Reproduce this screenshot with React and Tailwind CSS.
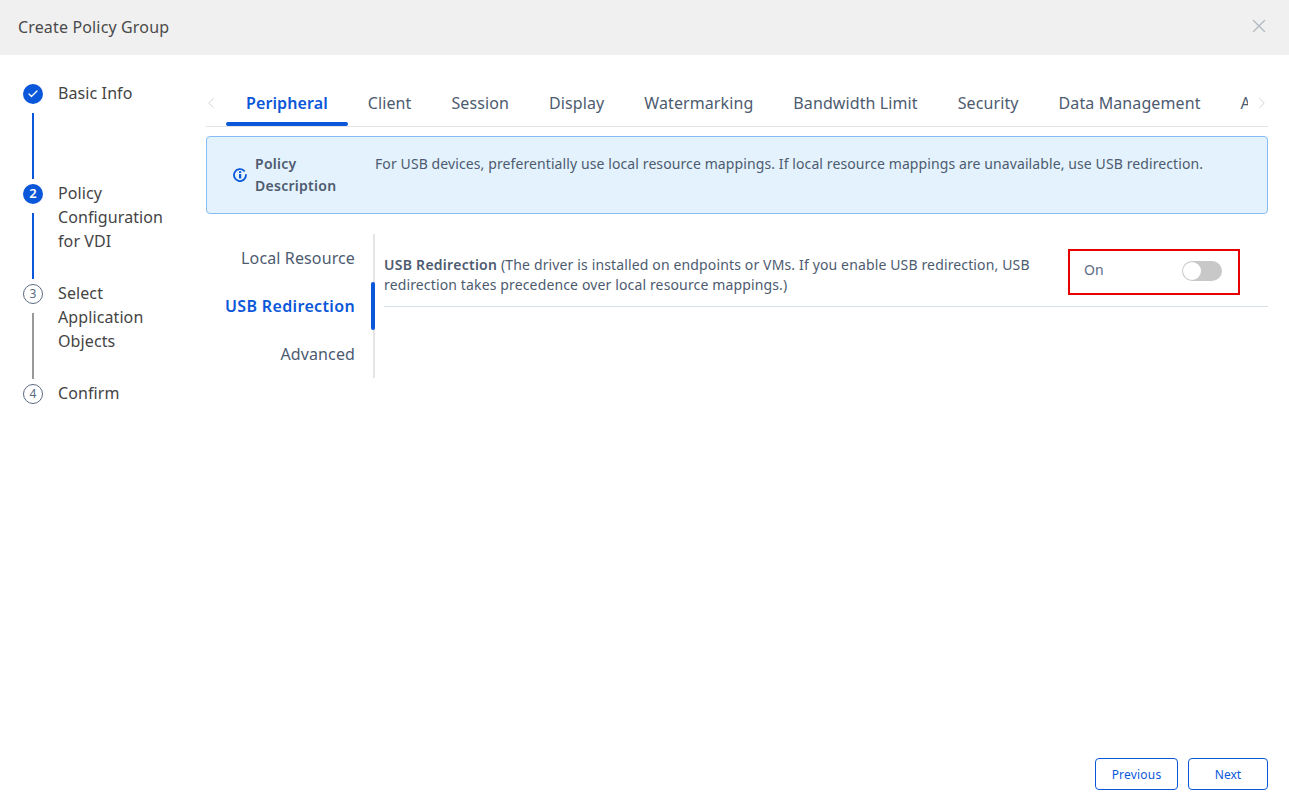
import { X, ChevronLeft, ChevronRight, Check } from "lucide-react";

const steps = [
  { label: "Basic Info", state: "done" },
  { label: "Policy Configuration for VDI", state: "active", num: 2 },
  { label: "Select Application Objects", state: "todo", num: 3 },
  { label: "Confirm", state: "todo", num: 4, last: true },
];

const tabs = [
  "Peripheral",
  "Client",
  "Session",
  "Display",
  "Watermarking",
  "Bandwidth Limit",
  "Security",
  "Data Management",
  "Advanced",
];

const Step = ({ step }) => {
  const isTodo = step.state === "todo";
  return (
    <div className={`flex ${step.last ? "" : "h-[100px]"}`}>
      <div className="w-[20px] flex flex-col items-center shrink-0">
        {isTodo ? (
          <div className="w-[20px] h-[20px] rounded-full border border-[#5b6b82] text-[#5b6b82] text-[12px] flex items-center justify-center">
            {step.num}
          </div>
        ) : (
          <div className="w-[20px] h-[20px] rounded-full bg-[#0b57d9] text-white text-[13px] font-semibold flex items-center justify-center">
            {step.state === "done" ? <Check size={12} strokeWidth={2.5} /> : step.num}
          </div>
        )}
        {!step.last && (
          <div className={`w-[2px] h-[66px] mt-[9px] ${isTodo ? "bg-[#999999]" : "bg-[#0b57d9]"}`} />
        )}
      </div>
      <div className="ml-[15px] w-[112px] text-[16px] leading-[24px] tracking-[0.1px] text-[#444] -mt-[3px]">
        {step.label}
      </div>
    </div>
  );
};

const App = () => {
  return (
    <div className="h-[805px] w-[1289px] flex flex-col bg-white overflow-hidden font-['Noto_Sans','Open_Sans',sans-serif]">
      {/* Header */}
      <div className="h-[55px] bg-[#f0f0f0] flex items-center justify-between pl-[18px] pr-[19px] shrink-0">
        <span className="text-[16px] tracking-[0.15px] text-[#4a4a4a] -mt-[2px]">Create Policy Group</span>
        <X size={22} strokeWidth={1.5} className="text-[#b4bac2] -mt-[4px]" />
      </div>

      <div className="flex flex-1 min-h-0">
        {/* Steps */}
        <div className="w-[206px] pl-[23px] pt-[29px] shrink-0">
          {steps.map((step) => (
            <Step key={step.label} step={step} />
          ))}
        </div>

        <div className="w-[1062px] flex flex-col">
          {/* Tabs */}
          <div className="mt-[24px] h-[48px] flex items-center border-b border-[#e5e5e5] relative">
            <div className="w-[20px] flex justify-start shrink-0">
              <ChevronLeft size={18} strokeWidth={1.25} className="text-[#ccd0d5] -ml-[4px] shrink-0" />
            </div>
            <div className="flex-1 overflow-hidden h-full flex">
              {tabs.map((tab, i) => (
                <div
                  key={tab}
                  className={`relative px-[20px] h-full flex items-center text-[16px] tracking-[0.1px] whitespace-nowrap shrink-0 ${
                    i === 0 ? "text-[#0b57d9] font-semibold" : "text-[#4d5b70]"
                  }`}
                >
                  {tab}
                  {i === 0 && (
                    <div className="absolute left-0 right-0 -bottom-0 h-[4px] rounded-full bg-[#0b57d9]" />
                  )}
                </div>
              ))}
            </div>
            <div className="w-[20px] flex justify-start shrink-0">
              <ChevronRight size={18} strokeWidth={1.25} className="text-[#ccd0d5] ml-[5px] shrink-0" />
            </div>
          </div>

          {/* Policy description */}
          <div className="mt-[9px] h-[78px] flex bg-[#e3f2fd] border border-[#85bdf5] rounded-[4px] pl-[26px] pt-[16px] text-[14px] leading-[22px] tracking-[0.1px] text-[#4d5b70]">
            <div className="w-[14px] h-[44px] flex items-center shrink-0">
              <svg width="14" height="14" viewBox="0 0 14 14" fill="none">
                <path d="M11.2 2.8A6 6 0 1 0 13 7" stroke="#0b57d9" strokeWidth="1.8" strokeLinecap="round" />
                <rect x="6" y="6" width="2.2" height="4.4" fill="#0b57d9" />
                <rect x="6" y="3.2" width="2.2" height="1.8" fill="#0b57d9" />
              </svg>
            </div>
            <div className="ml-[8px] w-[120px] shrink-0 font-semibold tracking-[0.27px]">Policy Description</div>
            <div>
              For USB devices, preferentially use local resource mappings. If local resource mappings are unavailable, use USB redirection.
            </div>
          </div>

          {/* Sub navigation + settings */}
          <div className="mt-[20px] flex">
            <div className="w-[169px] border-r-2 border-[#e5e5e5] text-[16px] tracking-[0.12px] text-right shrink-0">
              <div className="h-[48px] flex items-center justify-end pr-[18px] text-[#4d5b70]">Local Resource</div>
              <div className="relative h-[48px] flex items-center justify-end pr-[18px] text-[#0b57d9] font-semibold tracking-[0.35px]">
                USB Redirection
                <div className="absolute -right-[2px] top-0 w-[4px] h-[48px] rounded-full bg-[#0b57d9]" />
              </div>
              <div className="h-[48px] flex items-center justify-end pr-[18px] text-[#4d5b70]">Advanced</div>
            </div>
            <div className="flex-1 ml-[9px] self-start">
              <div className="h-[73px] flex items-start border-b border-[#d5e0e8] pt-[15px]">
                <div className="w-[684px] text-[14px] leading-[20px] tracking-[0.14px] text-[#4d5b70] pt-[6px] shrink-0">
                  <span className="font-semibold tracking-[0.27px]">USB Redirection</span> (The driver is installed on endpoints or VMs. If you enable USB redirection, USB redirection takes precedence over local resource mappings.)
                </div>
                <div className="w-[172px] h-[46px] ml-[0px] border-2 border-[#e60000] flex items-center justify-between pl-[14px] pr-[16px]">
                  <span className="text-[14px] text-[#5b6b82] -mt-[6px]">On</span>
                  <div className="w-[40px] h-[20px] rounded-full bg-[#c8c8c8] flex items-center pl-[1px] -mt-[2px]">
                    <div className="w-[18px] h-[18px] rounded-full bg-white" />
                  </div>
                </div>
              </div>
            </div>
          </div>

          {/* Footer */}
          <div className="mt-auto mb-[15px] flex justify-end gap-[10px] text-[12px] text-[#0b57d9]">
            <button className="w-[83px] h-[32px] pt-[2px] tracking-[0.2px] border border-[#0b57d9] rounded-[4px]">Previous</button>
            <button className="w-[80px] h-[32px] pt-[2px] border border-[#0b57d9] rounded-[4px]">Next</button>
          </div>
        </div>
      </div>
    </div>
  );
};

export default App;
